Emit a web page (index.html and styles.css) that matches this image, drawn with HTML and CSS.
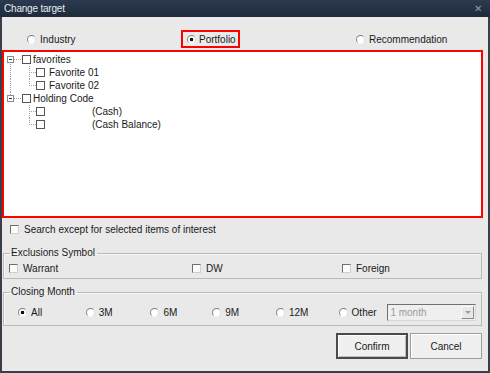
FILE: index.html
```html
<!DOCTYPE html>
<html lang="en">
<head>
  <meta charset="UTF-8" />
  <title>Change target</title>
  <link rel="stylesheet" href="styles.css">
</head>
<body>
  <div class="window">
    <div class="titlebar">
      <span class="title">Change target</span>
      <span class="close">&#x2715;</span>
    </div>

    <div class="target-row">
      <div class="target-cell first">
        <label class="opt"><span class="radio"></span>Industry</label>
      </div>
      <div class="target-cell">
        <label class="opt marked"><span class="radio on"></span>Portfolio</label>
      </div>
      <div class="target-cell">
        <label class="opt"><span class="radio"></span>Recommendation</label>
      </div>
    </div>

    <div class="tree">
      <div class="node">
        <span class="twig down"><span class="expander"></span><span class="dash"></span></span>
        <span class="tick"></span><span class="node-text">favorites</span>
      </div>
      <div class="node child">
        <span class="rail through"></span><span class="elbow tee"></span>
        <span class="tick"></span><span class="node-text">Favorite 01</span>
      </div>
      <div class="node child">
        <span class="rail through"></span><span class="elbow"></span>
        <span class="tick"></span><span class="node-text">Favorite 02</span>
      </div>
      <div class="node">
        <span class="twig up"><span class="expander"></span><span class="dash"></span></span>
        <span class="tick"></span><span class="node-text">Holding Code</span>
      </div>
      <div class="node child">
        <span class="rail"></span><span class="elbow tee"></span>
        <span class="tick"></span><span class="node-text"><span class="code-name"></span>(Cash)</span>
      </div>
      <div class="node child">
        <span class="rail"></span><span class="elbow"></span>
        <span class="tick"></span><span class="node-text"><span class="code-name"></span>(Cash Balance)</span>
      </div>
    </div>

    <label class="check-row search-row"><span class="box"></span>Search except for selected items of interest</label>

    <fieldset class="group">
      <legend>Exclusions Symbol</legend>
      <div class="group-row">
        <label class="check-row col-warrant"><span class="box"></span>Warrant</label>
        <label class="check-row col-dw"><span class="box"></span>DW</label>
        <label class="check-row"><span class="box"></span>Foreign</label>
      </div>
    </fieldset>

    <fieldset class="group month-group">
      <legend>Closing Month</legend>
      <div class="group-row month-row">
        <label class="opt m-all"><span class="radio on"></span>All</label>
        <label class="opt m-3"><span class="radio"></span>3M</label>
        <label class="opt m-6"><span class="radio"></span>6M</label>
        <label class="opt m-9"><span class="radio"></span>9M</label>
        <label class="opt m-12"><span class="radio"></span>12M</label>
        <label class="opt m-other"><span class="radio"></span>Other</label>
        <div class="combo">
          <span class="combo-text">1 month</span>
          <span class="combo-btn"></span>
        </div>
      </div>
    </fieldset>

    <div class="buttons">
      <button class="btn default">Confirm</button>
      <button class="btn">Cancel</button>
    </div>
  </div>
</body>
</html>
```

FILE: styles.css
```css
:root {
  --face: #e9e9e9;
  --frame: #3a3f47;
  --line: #a0a0a0;
  --text: #1a1a1a;
}

html, body {
  margin: 0;
  background: var(--face);
}

body {
  font-family: 'Liberation Sans', Arial, sans-serif;
  font-size: 10px;
  color: var(--text);
}

.window {
  width: 490px;
  height: 373px;
  box-sizing: border-box;
  border: 2px solid var(--frame);
  border-top: none;
  background: var(--face);
  display: flex;
  flex-direction: column;
}

/* title bar */
.titlebar {
  height: 17px;
  margin: 0 -2px;
  padding: 0 8px 0 4px;
  background: linear-gradient(#2c3b50, #1e2a3a);
  display: flex;
  align-items: center;
  justify-content: space-between;
}

.title {
  color: #e6ebf1;
  font-size: 10px;
  letter-spacing: -0.2px;
}

.close {
  color: #8d98a6;
  font-size: 10px;
}

/* radio + checkbox glyphs */
.radio {
  width: 9px;
  height: 9px;
  box-sizing: border-box;
  border-radius: 50%;
  border: 1px solid;
  border-color: #7d7d7d #dcdcdc #f4f4f4 #8a8a8a;
  background: #fff;
  flex: none;
}

.radio.on {
  background: radial-gradient(circle, #111 0 1.5px, #fff 2.1px);
}

.box {
  width: 9px;
  height: 9px;
  box-sizing: border-box;
  border: 1px solid;
  border-color: #6f6f6f #cfcfcf #cfcfcf #6f6f6f;
  background: #fbfbfb;
  flex: none;
}

.opt, .check-row {
  display: flex;
  align-items: center;
  height: 14px;
  white-space: nowrap;
}

.opt .radio {
  margin-right: 4px;
}

.check-row .box {
  margin-right: 5px;
}

/* target selector */
.target-row {
  display: grid;
  grid-template-columns: 179px 175px 1fr;
  height: 18px;
  margin-top: 13px;
  align-items: center;
}

.target-cell.first {
  padding-left: 25px;
}

.opt.marked {
  width: 59px;
  height: 18px;
  box-sizing: border-box;
  border: 2px solid #f00;
  padding-left: 4px;
}

.opt.marked .radio {
  margin-right: 3px;
}

/* tree */
.tree {
  height: 168px;
  box-sizing: border-box;
  margin: 2px 5px 0 0;
  border: 2px solid #f00;
  background: #fff;
  padding: 1px 0 0 0;
}

.node {
  display: flex;
  align-items: center;
  height: 13px;
}

.twig {
  width: 17px;
  height: 13px;
  display: flex;
  align-items: center;
}

.twig.down {
  background: repeating-linear-gradient(var(--line) 0 1px, transparent 1px 2px) 6px 9px / 1px 4px no-repeat;
}

.twig.up {
  background: repeating-linear-gradient(var(--line) 0 1px, transparent 1px 2px) 6px 0 / 1px 3px no-repeat;
}

.expander {
  width: 7px;
  height: 7px;
  box-sizing: border-box;
  margin-left: 3px;
  border: 1px solid #8c8c8c;
  background: linear-gradient(#333, #333) center / 3px 1px no-repeat, #fff;
}

.dash {
  width: 7px;
  border-top: 1px dotted var(--line);
}

.node .tick {
  width: 9px;
  height: 9px;
  box-sizing: border-box;
  border: 1px solid #555;
  background: #fff;
  margin-left: 1px;
  flex: none;
}

.node-text {
  margin-left: 2px;
  display: flex;
}

.rail {
  width: 17px;
  height: 13px;
}

.rail.through {
  background: repeating-linear-gradient(var(--line) 0 1px, transparent 1px 2px) 6px 0 / 1px 13px no-repeat;
}

.elbow {
  width: 15px;
  height: 13px;
  background:
    repeating-linear-gradient(var(--line) 0 1px, transparent 1px 2px) 8px 0 / 1px 7px no-repeat,
    repeating-linear-gradient(to right, var(--line) 0 1px, transparent 1px 2px) 8px 6px / 7px 1px no-repeat;
}

.elbow.tee {
  background:
    repeating-linear-gradient(var(--line) 0 1px, transparent 1px 2px) 8px 0 / 1px 13px no-repeat,
    repeating-linear-gradient(to right, var(--line) 0 1px, transparent 1px 2px) 8px 6px / 7px 1px no-repeat;
}

.child .tick {
  margin-left: 0;
}

.child .node-text {
  margin-left: 4px;
}

.code-name {
  width: 43px;
}

/* lower options */
.search-row {
  margin: 4px 0 0 8px;
}

.group {
  margin: 11px 6px 0 1px;
  padding: 0 5px 3px 5px;
  border: 1px solid #b9b9b9;
  box-shadow: inset 1px 1px 0 #f7f7f7;
  min-width: 0;
}

.group legend {
  padding: 0 2px 0 1px;
  margin-left: 1px;
  line-height: 12px;
}

.group-row {
  display: flex;
  align-items: center;
  margin-top: 2px;
}

.col-warrant {
  width: 183px;
}

.col-dw {
  width: 150px;
}

.month-group {
  margin-top: 7px;
  padding-bottom: 4px;
}

.month-row {
  height: 18px;
  margin-top: 5px;
  padding-left: 9px;
}

.m-all { width: 68px; }
.m-3 { width: 65px; }
.m-6 { width: 62px; }
.m-9 { width: 64px; }
.m-12 { width: 63px; }
.m-other { width: 49px; }

.combo {
  width: 89px;
  height: 17px;
  box-sizing: border-box;
  border: 1px solid;
  border-color: #707070 #d8d8d8 #d8d8d8 #707070;
  background: #efefef;
  display: flex;
  align-items: center;
  justify-content: space-between;
  padding: 0 1px 0 2px;
}

.combo-text {
  color: #9a9a9a;
}

.combo-btn {
  width: 13px;
  height: 13px;
  box-sizing: border-box;
  border: 1px solid;
  border-color: #fafafa #8a8a8a #8a8a8a #fafafa;
  background: #e8e8e8;
  display: flex;
  align-items: center;
  justify-content: center;
}

.combo-btn::after {
  content: "";
  border-left: 3px solid transparent;
  border-right: 3px solid transparent;
  border-top: 3px solid #9a9a9a;
}

/* dialog buttons */
.buttons {
  display: flex;
  justify-content: flex-end;
  gap: 2px;
  margin-top: 7px;
  padding-right: 6px;
}

.btn {
  width: 72px;
  height: 26px;
  font-family: inherit;
  font-size: 10px;
  color: var(--text);
  background: #f0f0f0;
  border: 1px solid #9d9d9d;
  box-shadow: inset 1px 1px 0 #fff;
  padding: 0;
}

.btn.default {
  border: 2px solid #4a4a4a;
  box-shadow: inset 1px 1px 0 #fff, inset -1px -1px 0 #bdbdbd;
}
```
